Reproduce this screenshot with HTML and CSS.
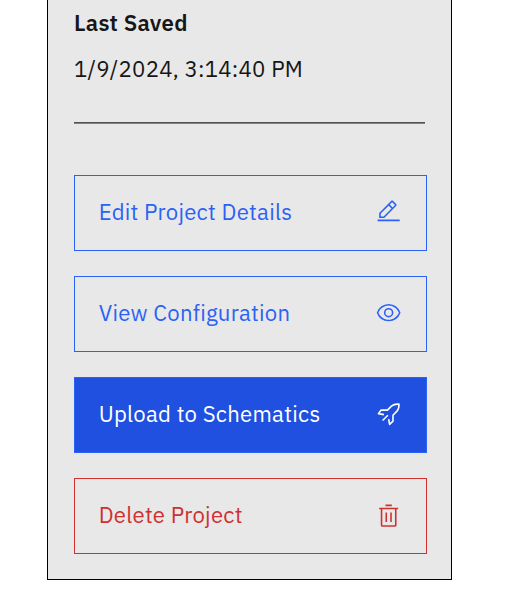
FILE: index.html
```html
<!DOCTYPE html>
<html lang="en">
<head>
<meta charset="utf-8">
<title>Project</title>
<link rel="stylesheet" href="styles.css">
</head>
<body>
<aside class="panel">
  <h2 class="heading">Last Saved</h2>
  <p class="date">1/9/2024, 3:14:40 PM</p>
  <hr class="divider">
  <div class="actions">
    <button class="btn"><span>Edit Project Details</span>
      <svg class="icon" viewBox="0 0 32 32"><path d="M2 26H30V28H2zM25.4 9c.8-.8.8-2 0-2.8l-3.6-3.6c-.8-.8-2-.8-2.8 0l-15 15V24h6.4L25.4 9zM20.4 4L24 7.6l-3 3L17.4 7 20.4 4zM6 22v-3.6l10-10 3.6 3.6-10 10H6z"/></svg></button>
    <button class="btn"><span>View Configuration</span>
      <svg class="icon" viewBox="0 0 32 32"><path d="M30.94 15.66A16.69 16.69 0 0 0 16 5 16.69 16.69 0 0 0 1.06 15.66a1 1 0 0 0 0 .68A16.69 16.69 0 0 0 16 27 16.69 16.69 0 0 0 30.94 16.34 1 1 0 0 0 30.94 15.66ZM16 25c-5.3 0-10.9-3.93-12.93-9C5.1 10.93 10.7 7 16 7s10.9 3.93 12.93 9C26.9 21.07 21.3 25 16 25ZM16 10a6 6 0 1 0 6 6A6 6 0 0 0 16 10Zm0 10a4 4 0 1 1 4-4A4 4 0 0 1 16 20Z"/></svg></button>
    <button class="btn btn-primary"><span>Upload to Schematics</span>
      <svg class="icon icon-line" viewBox="0 0 32 32"><path d="M10 17.200L3 16L6.500 11.500H14.500L19.500 6.500Q23 3.500 29 4Q29.500 9.500 26.500 12.800L21.500 18V25.500L17.200 29.500L16 23M15 18L8.300 24.700"/></svg></button>
    <button class="btn btn-danger"><span>Delete Project</span>
      <svg class="icon icon-trash" viewBox="0 0 32 32"><path d="M12 12H14V24H12zM18 12H20V24H18zM4 6V8H6V28a2 2 0 0 0 2 2H24a2 2 0 0 0 2-2V8h2V6ZM8 28V8H24V28ZM12 2H20V4H12z"/></svg></button>
  </div>
</aside>
</body>
</html>
```
FILE: styles.css
```css
* { box-sizing: border-box; }
body { margin: 0; background: #fff; font-family: "IBM Plex Sans", "Noto Sans", sans-serif; overflow: hidden; }
.panel { width: 405px; height: 580px; margin-left: 47px; padding: 8px 24px 0 26px; background: #e8e8e8; border: 1px solid #000; border-top: 0; color: #161616; }
.heading, .date { margin: 0; font-size: 22.170px; line-height: 30px; letter-spacing: .25px; white-space: nowrap; }
.heading { font-weight: 600; }
.date { margin-top: 16px; }
.divider { width: 351px; height: 2px; margin: 38px 0 51px; border: 0; background: linear-gradient(#535353 50%, #828082 50%); }
.actions { display: flex; flex-direction: column; gap: 25px; }
.btn { display: flex; align-items: center; justify-content: space-between; width: 353px; height: 76px; padding: 0 24.700px 2px 23.700px; border: 1px solid #2b62f6; background: transparent; color: #2b62f6; font: 22.170px/28px "IBM Plex Sans", "Noto Sans", sans-serif; letter-spacing: .25px; white-space: nowrap; }
.btn-primary { background: #2050df; color: #fff; }
.btn-danger { border-color: #cf3030; color: #cf3030; }
.icon { width: 25.300px; height: 25.300px; fill: currentColor; flex: none; }
.icon-line { fill: none; stroke: currentColor; stroke-width: 2; stroke-linejoin: round; }
.icon-trash { margin-top: 1.500px; }
```
